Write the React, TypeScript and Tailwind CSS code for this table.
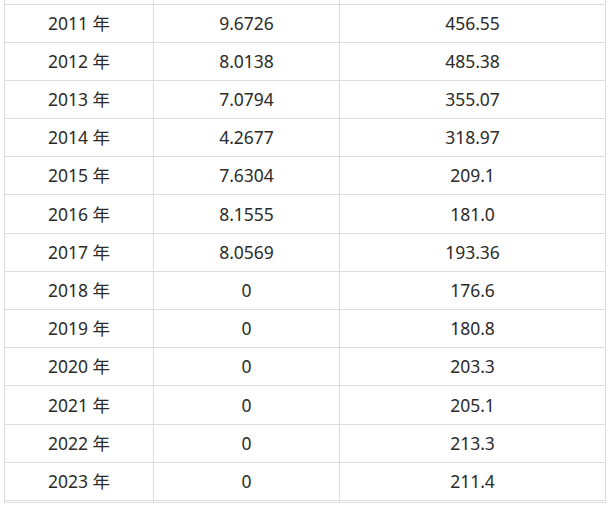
const rows = [
  { year: "2011 年", a: "9.6726", b: "456.55", h: "h-[38px]" },
  { year: "2012 年", a: "8.0138", b: "485.38", h: "h-[38px]" },
  { year: "2013 年", a: "7.0794", b: "355.07", h: "h-[38px]" },
  { year: "2014 年", a: "4.2677", b: "318.97", h: "h-[38px]" },
  { year: "2015 年", a: "7.6304", b: "209.1", h: "h-[38px]" },
  { year: "2016 年", a: "8.1555", b: "181.0", h: "h-[39px]" },
  { year: "2017 年", a: "8.0569", b: "193.36", h: "h-[38px]" },
  { year: "2018 年", a: "0", b: "176.6", h: "h-[38px]" },
  { year: "2019 年", a: "0", b: "180.8", h: "h-[38px]" },
  { year: "2020 年", a: "0", b: "203.3", h: "h-[38px]" },
  { year: "2021 年", a: "0", b: "205.1", h: "h-[39px]" },
  { year: "2022 年", a: "0", b: "213.3", h: "h-[38px]" },
  { year: "2023 年", a: "0", b: "211.4", h: "h-[38px]" },
]

function Row({ cells, h }: { cells: string[]; h: string }) {
  return (
    <div className={`grid grid-cols-[149px_186px_266px] border-l border-b border-[#dddddd] ${h}`}>
      {cells.map((c, i) => (
        <div key={i} className="flex items-center justify-center border-r border-[#dddddd]">
          {c}
        </div>
      ))}
    </div>
  )
}

export default function App() {
  return (
    <div
      className="w-[609px] h-[512px] bg-white pl-[4px] text-[17.5px] text-[#2b2b2b]"
      style={{ fontFamily: '"Noto Sans", "Noto Sans CJK SC", sans-serif' }}
    >
      <div className="w-[602px]">
        <Row cells={["", "", ""]} h="h-[5px]" />
        {rows.map((r) => (
          <Row key={r.year} cells={[r.year, r.a, r.b]} h={r.h} />
        ))}
        <Row cells={["", "", ""]} h="h-[2px]" />
      </div>
    </div>
  )
}
